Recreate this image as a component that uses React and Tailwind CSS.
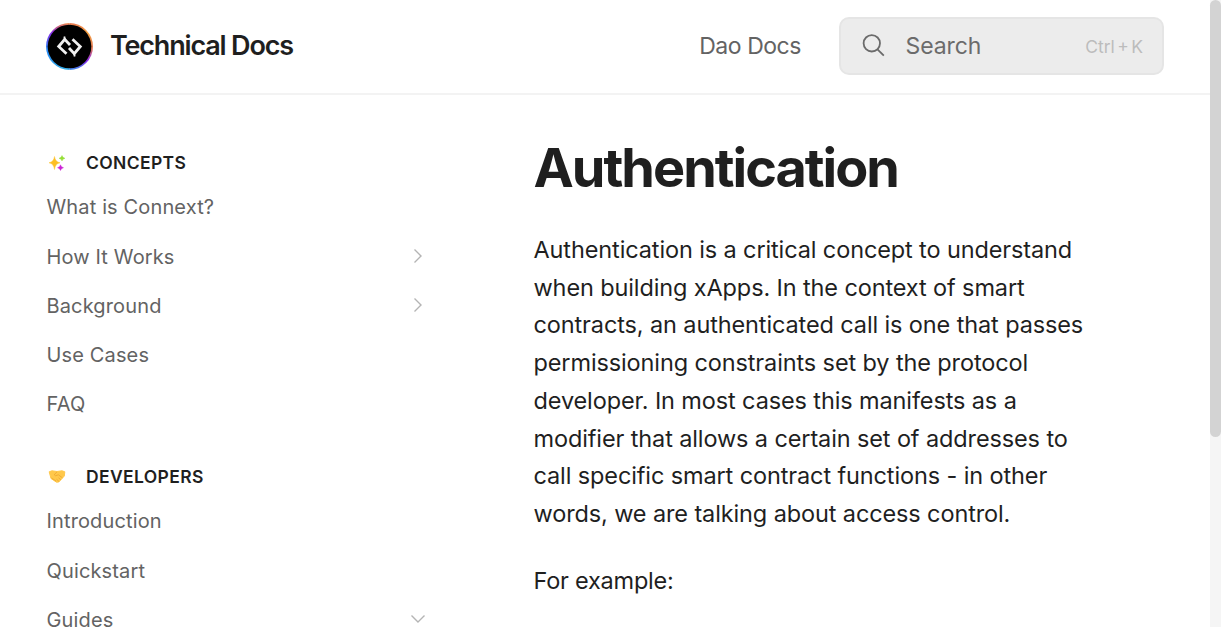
function Chevron({ down }) {
  return (
    <svg width="16" height="16" viewBox="0 0 16 16" fill="none" stroke="#b4b4b4" strokeWidth="1.4" className="mr-[10px] mb-px">
      {down ? <path d="M1.500 4.500 8 11l6.500-6.500" /> : <path d="M4.500 1.500 11 8 4.500 14.500" />}
    </svg>
  );
}

function Item({ label, arrow, down }) {
  return (
    <div className="flex h-[49.200px] shrink-0 items-center justify-between text-[20px] leading-[16px] tracking-[0.140px] text-[#636363]">
      <span>{label}</span>
      {arrow && <Chevron down={down} />}
    </div>
  );
}

function Heading({ icon, label }) {
  return (
    <div className="flex h-10 shrink-0 items-center">
      <span className="flex w-[39.500px] pb-px pl-[1.500px]">{icon}</span>
      <span className="pt-px text-[17.500px] font-semibold tracking-[0.360px] text-[#1f1f1f]">{label}</span>
    </div>
  );
}

function Logo() {
  return (
    <svg width="47" height="47" viewBox="0 0 47 47" fill="none">
      <defs>
        <linearGradient id="left" x1="0" y1="0" x2="0" y2="1">
          <stop offset="0" stopColor="#ee8a45" />
          <stop offset="0.200" stopColor="#8a2be8" />
          <stop offset="0.550" stopColor="#2684f5" />
          <stop offset="1" stopColor="#35aee8" />
        </linearGradient>
        <linearGradient id="right" x1="0" y1="0" x2="0" y2="1">
          <stop offset="0" stopColor="#e87850" />
          <stop offset="0.200" stopColor="#f5a040" />
          <stop offset="0.550" stopColor="#dd7555" />
          <stop offset="0.800" stopColor="#8a28ef" />
          <stop offset="1" stopColor="#3b8ce8" />
        </linearGradient>
      </defs>
      <path d="M23.500 0a23.500 23.500 0 0 0 0 47Z" fill="url(#left)" />
      <path d="M23.500 0a23.500 23.500 0 0 1 0 47Z" fill="url(#right)" />
      <circle cx="23.500" cy="23.500" r="21.800" fill="#000" />
      <path d="m20.500 30.800-7.800-7.300 6-7.200 5.300 5.700M26.500 16.200l7.800 7.300-6 7.200-5.300-5.700" stroke="#f0f0f0" strokeWidth="2.800" />
      <path d="m18.300 13.500.800 4M28.700 33.500l-.800-4" stroke="#f0f0f0" strokeWidth="1.800" />
    </svg>
  );
}

function Sparkles() {
  return (
    <svg width="18" height="18" viewBox="0 0 18 18">
      <path d="M6.500 3.500Q7.300 9 12 9.800 7.300 10.500 6.500 16.500 5.700 10.500 1 9.800 5.700 9 6.500 3.500Z" fill="#fdbf24" stroke="#fdc638" strokeWidth=".5" />
      <path d="M14 2.500q.500 2.300 3 2.800-2.500.500-3 2.700-.500-2.200-3-2.700Q13.500 4.800 14 2.500Z" fill="#94df36" stroke="#94df36" strokeWidth=".4" />
      <path d="M12.500 11.800q.500 2.400 3 2.900-2.500.500-3 2.800-.500-2.300-3-2.800 2.500-.500 3-2.900Z" fill="#cb22d5" stroke="#cb22d5" strokeWidth=".4" />
    </svg>
  );
}

function Handshake() {
  return (
    <svg width="18" height="18" viewBox="0 0 18 18">
      <path d="M1.200 4.800 4 3.800 9 4.500 14 3.800 16.800 4.800 16.300 9 14.500 11 10.800 15 8.500 15.200 3 11.500Z" fill="#ffc84b" stroke="#ffc84b" strokeLinejoin="round" />
      <path d="M9 4.900 6.200 7.700 7.700 8.800l2.600-1 4.200 3M3.500 11l4.500 3M10.500 10.800l2.300 2M8.500 12.200l2.500 2.300" fill="none" stroke="#e9a02c" strokeWidth=".7" />
    </svg>
  );
}

const lines = [
  'Authentication is a critical concept to understand',
  'when building xApps. In the context of smart',
  'contracts, an authenticated call is one that passes',
  'permissioning constraints set by the protocol',
  'developer. In most cases this manifests as a',
  'modifier that allows a certain set of addresses to',
  'call specific smart contract functions - in other',
  'words, we are talking about access control.',
];

export default function App() {
  return (
    <div className="flex h-[627px] w-[1221px] overflow-hidden bg-white font-['Inter',sans-serif] text-[#1f1f1f]">
      <div className="flex w-[1210px] flex-col">
        <header className="flex h-[95px] shrink-0 items-center border-b-2 border-[#f3f3f3] px-[46px]">
          <Logo />
          <div className="ml-[17px] text-[27px] font-semibold tracking-[-1.180px]">Technical Docs</div>
          <div className="mr-[38px] ml-auto text-[23px] tracking-[-0.450px] text-[#636363]">Dao Docs</div>
          <div className="mb-[2px] flex h-[58px] w-[325px] items-center rounded-[10px] border-2 border-[#e5e5e5] bg-[#ececec] pr-[19px] pl-[18px] text-[#6b6b6b]">
            <svg width="28" height="28" viewBox="0 0 28 28" fill="none" stroke="#6b6b6b" strokeWidth="1.800"><circle cx="12.800" cy="11.300" r="8.200" /><path d="m18.500 17.300 6.300 6.300" /></svg>
            <span className="ml-[18.500px] pt-px text-[23px] tracking-[-0.100px]">Search</span>
            <span className="ml-auto pt-[3px] text-[17.500px] [word-spacing:-2.500px] text-[#bcbcbc]">Ctrl + K</span>
          </div>
        </header>
        <div className="flex min-h-0 grow">
          <nav className="flex w-[436px] flex-col pt-[47.900px] pl-[46.500px]">
            <Heading icon={<Sparkles />} label="CONCEPTS" />
            <Item label="What is Connext?" />
            <Item label="How It Works" arrow />
            <Item label="Background" arrow />
            <Item label="Use Cases" />
            <Item label="FAQ" />
            <div className="h-7 shrink-0" />
            <Heading icon={<Handshake />} label="DEVELOPERS" />
            <Item label="Introduction" />
            <Item label="Quickstart" />
            <Item label="Guides" arrow down />
          </nav>
          <main className="ml-[97.500px] pt-[41px]">
            <h1 className="text-[54px] leading-[64px] font-bold tracking-[-2px]">Authentication</h1>
            <p className="mt-[31px] text-[23.500px] leading-[37.700px] tracking-[-0.120px] whitespace-nowrap">
              {lines.map((l) => <span key={l} className="block">{l}</span>)}
            </p>
            <p className="mt-[29px] text-[23.500px] leading-[37.700px] tracking-[-0.230px]">For example:</p>
          </main>
        </div>
      </div>
      <div className="w-[11px] bg-[#f5f5f5]"><div className="h-[437px] rounded-full bg-[#d3d3d3]" /></div>
    </div>
  );
}
